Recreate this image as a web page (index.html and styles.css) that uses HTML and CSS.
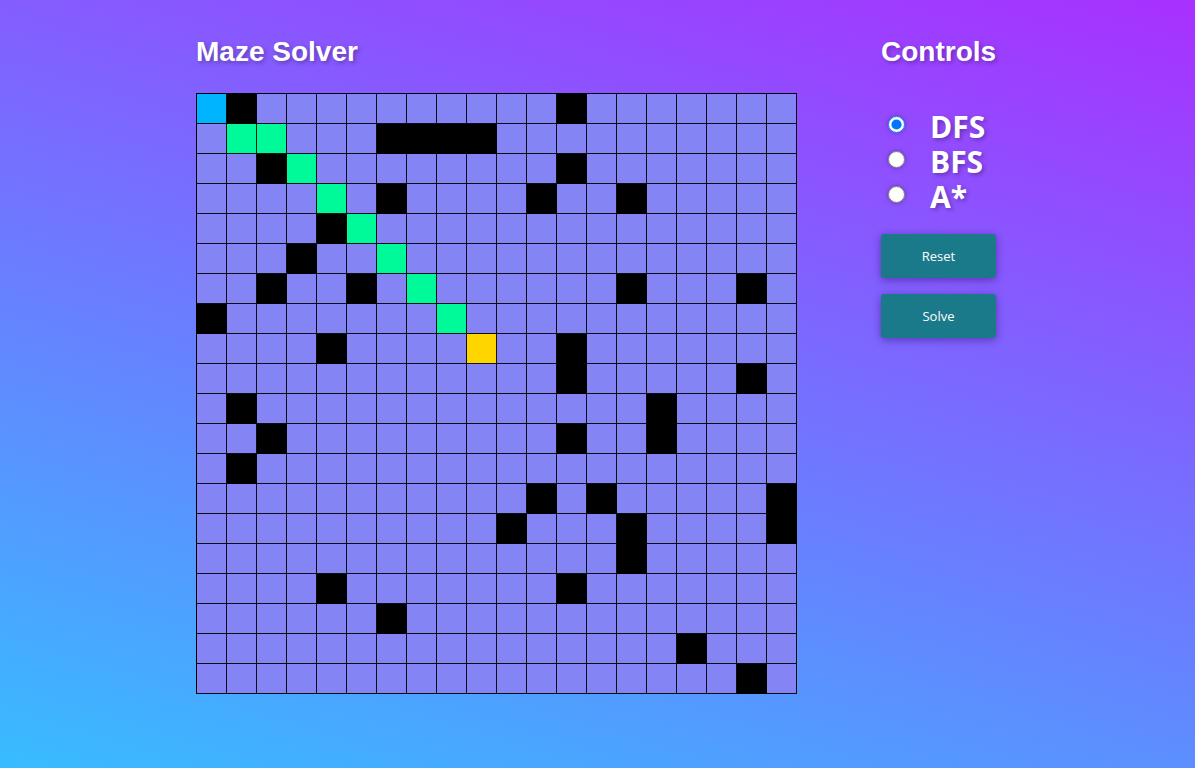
FILE: index.html
```html
<!DOCTYPE html>
<html lang="en">
<head>
<meta charset="utf-8">
<title>Maze Solver</title>
<link rel="stylesheet" href="styles.css">
</head>
<body>
<div class="page">
  <section class="board">
    <h2 class="title">Maze Solver</h2>
    <div class="maze">
      <span class="s"></span><span class="w"></span><span></span><span></span><span></span><span></span><span></span><span></span><span></span><span></span><span></span><span></span><span class="w"></span><span></span><span></span><span></span><span></span><span></span><span></span><span></span>
      <span></span><span class="p"></span><span class="p"></span><span></span><span></span><span></span><span class="w"></span><span class="w"></span><span class="w"></span><span class="w"></span><span></span><span></span><span></span><span></span><span></span><span></span><span></span><span></span><span></span><span></span>
      <span></span><span></span><span class="w"></span><span class="p"></span><span></span><span></span><span></span><span></span><span></span><span></span><span></span><span></span><span class="w"></span><span></span><span></span><span></span><span></span><span></span><span></span><span></span>
      <span></span><span></span><span></span><span></span><span class="p"></span><span></span><span class="w"></span><span></span><span></span><span></span><span></span><span class="w"></span><span></span><span></span><span class="w"></span><span></span><span></span><span></span><span></span><span></span>
      <span></span><span></span><span></span><span></span><span class="w"></span><span class="p"></span><span></span><span></span><span></span><span></span><span></span><span></span><span></span><span></span><span></span><span></span><span></span><span></span><span></span><span></span>
      <span></span><span></span><span></span><span class="w"></span><span></span><span></span><span class="p"></span><span></span><span></span><span></span><span></span><span></span><span></span><span></span><span></span><span></span><span></span><span></span><span></span><span></span>
      <span></span><span></span><span class="w"></span><span></span><span></span><span class="w"></span><span></span><span class="p"></span><span></span><span></span><span></span><span></span><span></span><span></span><span class="w"></span><span></span><span></span><span></span><span class="w"></span><span></span>
      <span class="w"></span><span></span><span></span><span></span><span></span><span></span><span></span><span></span><span class="p"></span><span></span><span></span><span></span><span></span><span></span><span></span><span></span><span></span><span></span><span></span><span></span>
      <span></span><span></span><span></span><span></span><span class="w"></span><span></span><span></span><span></span><span></span><span class="e"></span><span></span><span></span><span class="w"></span><span></span><span></span><span></span><span></span><span></span><span></span><span></span>
      <span></span><span></span><span></span><span></span><span></span><span></span><span></span><span></span><span></span><span></span><span></span><span></span><span class="w"></span><span></span><span></span><span></span><span></span><span></span><span class="w"></span><span></span>
      <span></span><span class="w"></span><span></span><span></span><span></span><span></span><span></span><span></span><span></span><span></span><span></span><span></span><span></span><span></span><span></span><span class="w"></span><span></span><span></span><span></span><span></span>
      <span></span><span></span><span class="w"></span><span></span><span></span><span></span><span></span><span></span><span></span><span></span><span></span><span></span><span class="w"></span><span></span><span></span><span class="w"></span><span></span><span></span><span></span><span></span>
      <span></span><span class="w"></span><span></span><span></span><span></span><span></span><span></span><span></span><span></span><span></span><span></span><span></span><span></span><span></span><span></span><span></span><span></span><span></span><span></span><span></span>
      <span></span><span></span><span></span><span></span><span></span><span></span><span></span><span></span><span></span><span></span><span></span><span class="w"></span><span></span><span class="w"></span><span></span><span></span><span></span><span></span><span></span><span class="w"></span>
      <span></span><span></span><span></span><span></span><span></span><span></span><span></span><span></span><span></span><span></span><span class="w"></span><span></span><span></span><span></span><span class="w"></span><span></span><span></span><span></span><span></span><span class="w"></span>
      <span></span><span></span><span></span><span></span><span></span><span></span><span></span><span></span><span></span><span></span><span></span><span></span><span></span><span></span><span class="w"></span><span></span><span></span><span></span><span></span><span></span>
      <span></span><span></span><span></span><span></span><span class="w"></span><span></span><span></span><span></span><span></span><span></span><span></span><span></span><span class="w"></span><span></span><span></span><span></span><span></span><span></span><span></span><span></span>
      <span></span><span></span><span></span><span></span><span></span><span></span><span class="w"></span><span></span><span></span><span></span><span></span><span></span><span></span><span></span><span></span><span></span><span></span><span></span><span></span><span></span>
      <span></span><span></span><span></span><span></span><span></span><span></span><span></span><span></span><span></span><span></span><span></span><span></span><span></span><span></span><span></span><span></span><span class="w"></span><span></span><span></span><span></span>
      <span></span><span></span><span></span><span></span><span></span><span></span><span></span><span></span><span></span><span></span><span></span><span></span><span></span><span></span><span></span><span></span><span></span><span></span><span class="w"></span><span></span>
    </div>
  </section>
  <aside class="controls">
    <h2 class="title">Controls</h2>
    <div class="algos">
      <label class="algo"><input type="radio" name="algo" value="dfs" checked><span>DFS</span></label>
      <label class="algo"><input type="radio" name="algo" value="bfs"><span>BFS</span></label>
      <label class="algo"><input type="radio" name="algo" value="astar"><span>A*</span></label>
    </div>
    <button class="btn" type="button">Reset</button>
    <button class="btn" type="button">Solve</button>
  </aside>
</div>
</body>
</html>
```
FILE: styles.css
```css
html, body {
  margin: 0;
  height: 100%;
}
body {
  background: linear-gradient(17deg, #38bcff 0%, #a830ff 100%);
  font-family: "Liberation Sans", Arial, sans-serif;
  color: #fff;
}
.page {
  display: flex;
  justify-content: center;
  gap: 84px;
  padding: 36px 0 0 0;
  margin-left: -3px;
}
.title {
  margin: 0 0 25px 0;
  font-size: 28px;
  line-height: 32px;
  font-weight: bold;
  text-shadow: 2px 2px 4px rgba(0, 0, 0, 0.3);
}
.maze {
  display: grid;
  grid-template-columns: repeat(20, 30px);
  grid-auto-rows: 30px;
  width: fit-content;
  border-left: 1px solid #000;
  border-top: 1px solid #000;
}
.maze span {
  box-sizing: border-box;
  border-right: 1px solid rgba(0, 0, 0, 0.9);
  border-bottom: 1px solid rgba(0, 0, 0, 0.9);
  background: #8484f4;
}
.maze span.w { background: #000; }
.maze span.s { background: #00b4ff; }
.maze span.e { background: #ffd500; }
.maze span.p { background: #00fa9a; }

.controls {
  width: 115px;
  display: flex;
  flex-direction: column;
}
.controls .title {
  text-align: center;
  margin-bottom: 39px;
}
.algos {
  display: flex;
  flex-direction: column;
  margin-bottom: 22px;
}
.algo {
  display: flex;
  align-items: center;
  height: 35px;
  font-family: "Open Sans", "Noto Sans", sans-serif;
  font-weight: bold;
  font-size: 30px;
  line-height: 35px;
  text-shadow: 2px 2px 4px rgba(0, 0, 0, 0.3);
}
.algo input {
  width: 17px;
  height: 17px;
  margin: 0 25px 0 7px;
  filter: drop-shadow(0 0 2px rgba(60, 20, 110, 0.5));
}
.algo span {
  display: block;
  height: 35px;
  line-height: 35px;
  position: relative;
  top: 2px;
}
.btn {
  width: 115px;
  height: 44px;
  margin-bottom: 16px;
  border: none;
  border-radius: 3px;
  background: #1a7a8a;
  color: #fff;
  font-family: "Open Sans", "Noto Sans", sans-serif;
  font-size: 13px;
  box-shadow: 0 2px 8px rgba(40, 0, 90, 0.45);
}
```
